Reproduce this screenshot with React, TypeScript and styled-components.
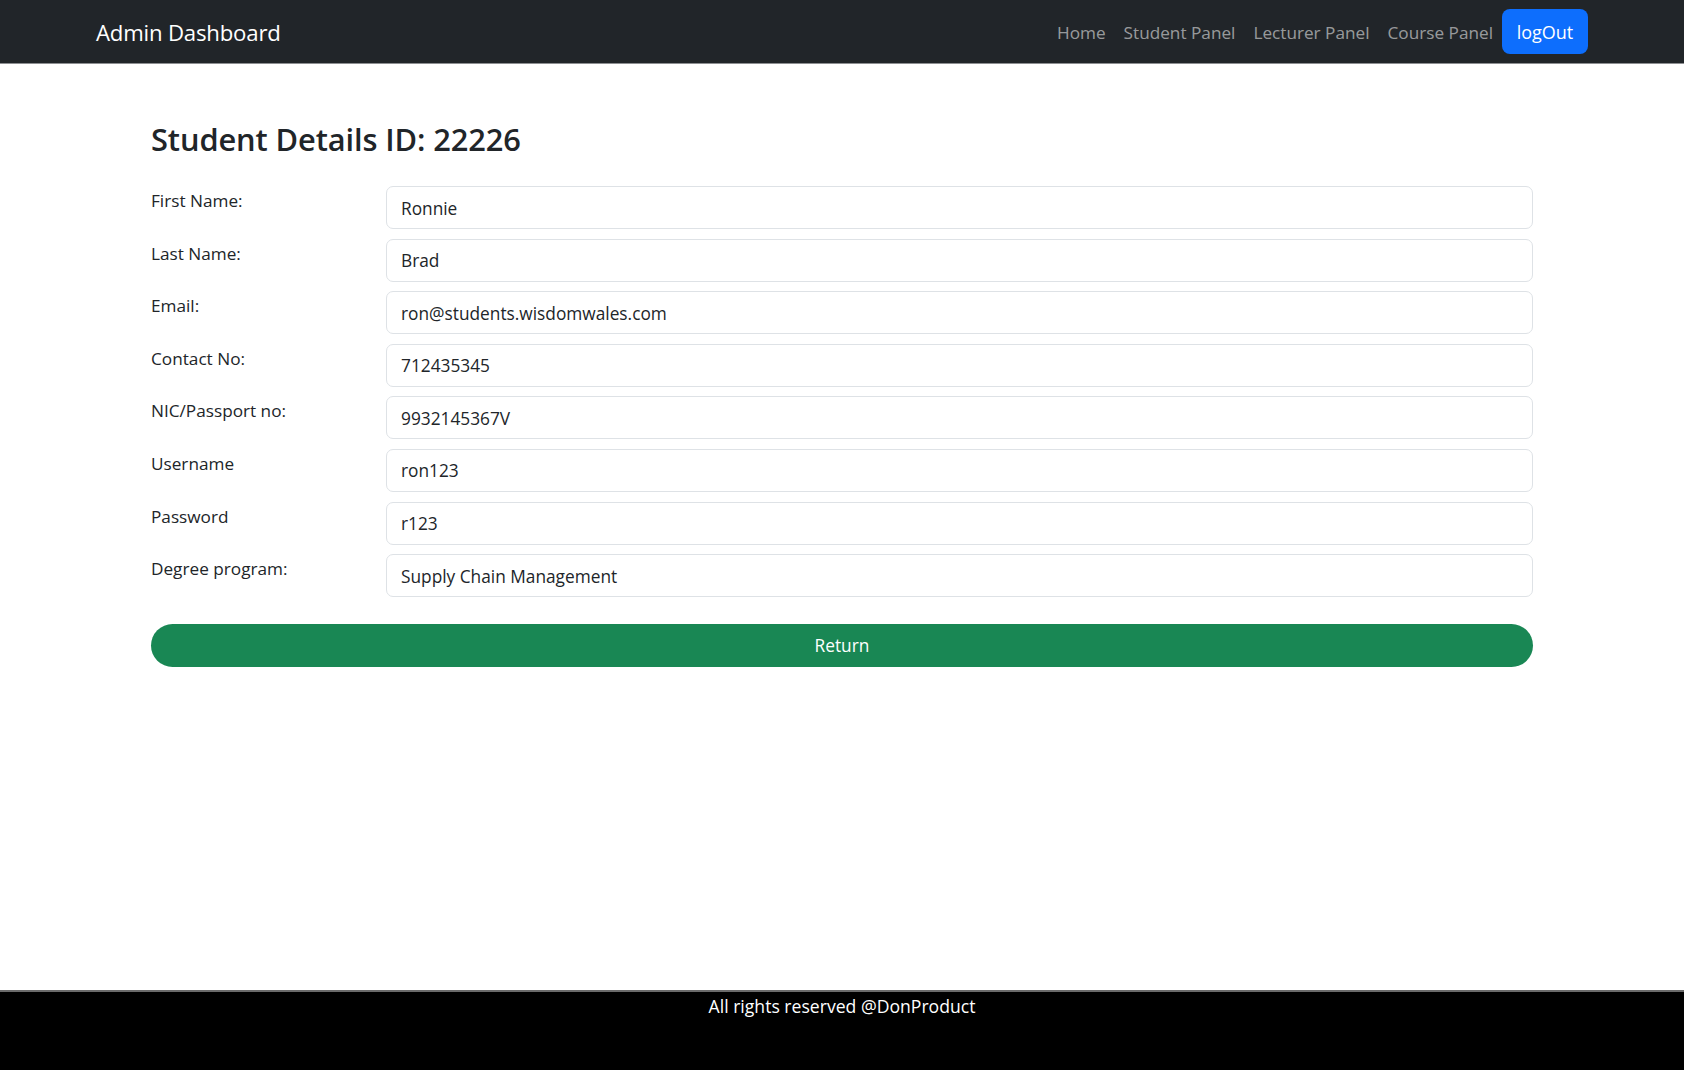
import styled, { createGlobalStyle } from 'styled-components';

const GlobalStyle = createGlobalStyle`
    html, body {
        margin: 0;
        padding: 0;
    }
    body {
        font-family: 'Open Sans', 'Noto Sans', sans-serif;
        color: #212529;
        background: #fff;
    }
    * {
        box-sizing: border-box;
    }
`;

const student = [
    { label: 'First Name:', value: 'Ronnie' },
    { label: 'Last Name:', value: 'Brad' },
    { label: 'Email:', value: 'ron@students.wisdomwales.com' },
    { label: 'Contact No:', value: '712435345' },
    { label: 'NIC/Passport no:', value: '9932145367V' },
    { label: 'Username', value: 'ron123' },
    { label: 'Password', value: 'r123' },
    { label: 'Degree program:', value: 'Supply Chain Management' },
];

const links = ['Home', 'Student Panel', 'Lecturer Panel', 'Course Panel'];

export default function App() {
    return (
        <>
            <GlobalStyle />
            <Page>
                <Navbar>
                    <Brand>Admin Dashboard</Brand>
                    <NavList>
                        {links.map((l) => (
                            <NavLink key={l}>{l}</NavLink>
                        ))}
                        <LogoutButton>logOut</LogoutButton>
                    </NavList>
                </Navbar>
                <Main>
                    <Title>Student Details ID: 22226</Title>
                    {student.map((f) => (
                        <FormRow key={f.label}>
                            <Label>{f.label}</Label>
                            <Input value={f.value} readOnly />
                        </FormRow>
                    ))}
                    <ReturnButton>Return</ReturnButton>
                </Main>
                <Footer>All rights reserved @DonProduct</Footer>
            </Page>
        </>
    );
}

const Page = styled.div`
    min-height: 100vh;
    display: flex;
    flex-direction: column;
`;

const Navbar = styled.nav`
    height: 64px;
    background: #212529;
    border-bottom: 1px solid #8d8f92;
    display: flex;
    align-items: center;
    justify-content: space-between;
    padding: 0 96px;
`;

const Brand = styled.a`
    color: #fff;
    font-size: 22.2px;
    letter-spacing: -0.2px;
    padding-top: 2px;
    cursor: pointer;
`;

const NavList = styled.div`
    display: flex;
    align-items: center;
`;

const NavLink = styled.a`
    color: rgba(255, 255, 255, 0.55);
    font-size: 17.2px;
    padding: 2px 9px 0;
    cursor: pointer;
`;

const LogoutButton = styled.button`
    height: 45px;
    width: 86px;
    border: none;
    border-radius: 8px;
    background: #0d6efd;
    color: #fff;
    font-family: inherit;
    font-size: 18px;
    cursor: pointer;
`;

const Main = styled.main`
    flex: 1;
    width: 1382px;
    margin: 0 auto;
    padding-top: 57px;
`;

const Title = styled.h3`
    margin: 0 0 28px;
    font-size: 30.8px;
    font-weight: 600;
    line-height: 37px;
    letter-spacing: -0.1px;
`;

const FormRow = styled.div`
    display: grid;
    grid-template-columns: 235px 1fr;
    margin-bottom: 9.6px;
`;

const Label = styled.label`
    font-size: 17.2px;
    line-height: 25px;
    padding-top: 2px;
`;

const Input = styled.input`
    height: 43px;
    width: 100%;
    border: 1px solid #dee2e6;
    border-radius: 7px;
    padding: 1px 14px 0;
    font-family: inherit;
    font-size: 17.3px;
    color: #212529;
    outline: none;
`;

const ReturnButton = styled.button`
    display: block;
    width: 100%;
    height: 43px;
    margin-top: 27px;
    border: none;
    border-radius: 22px;
    background: #198754;
    color: #fff;
    font-family: inherit;
    font-size: 17.3px;
    cursor: pointer;
`;

const Footer = styled.footer`
    height: 80px;
    background: #000;
    border-top: 2px solid #6b6b6b;
    color: #fff;
    text-align: center;
    font-size: 17.6px;
    line-height: 26px;
    padding-top: 1px;
`;
